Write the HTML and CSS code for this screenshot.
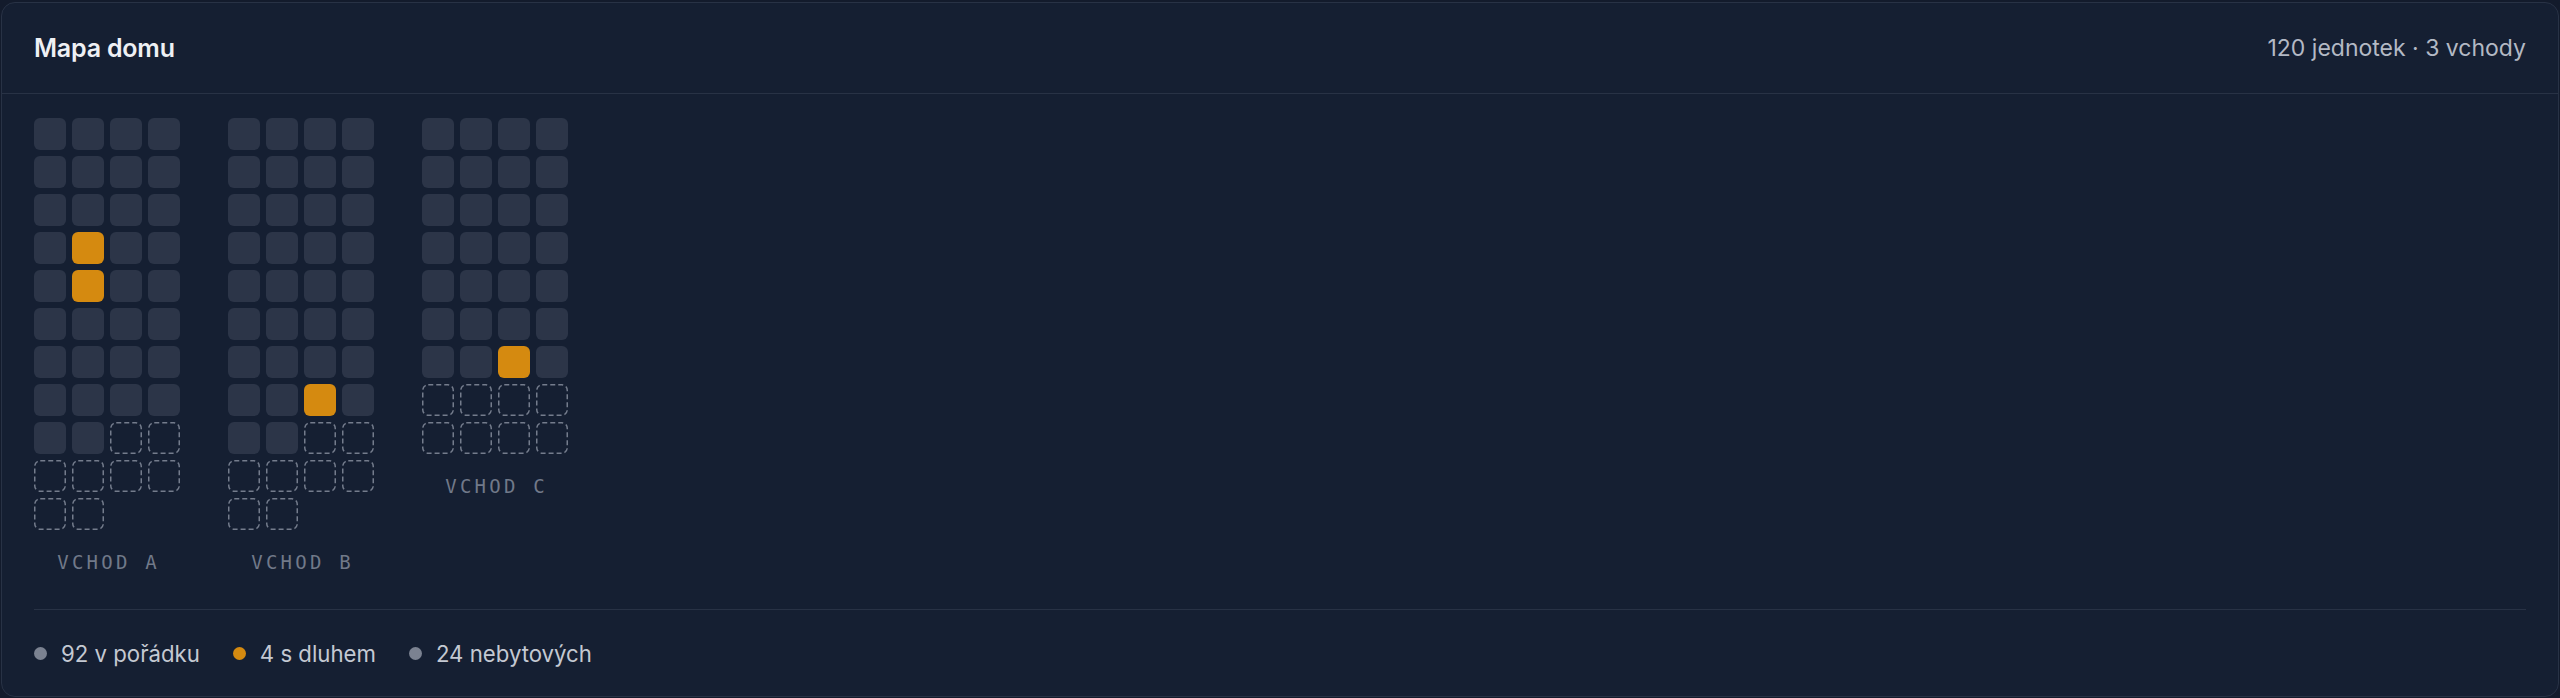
FILE: index.html
```html
<!DOCTYPE html>
<html lang="cs">
<head>
<meta charset="utf-8">
<title>Mapa domu</title>
<link rel="stylesheet" href="styles.css">
</head>
<body>
<section class="card">
  <header class="card-header">
    <h2 class="title">Mapa domu</h2>
    <span class="meta">120 jednotek · 3 vchody</span>
  </header>
  <div class="card-body">
    <div class="map">
      <div class="building">
        <div class="cells">
          <i class="cell"></i><i class="cell"></i><i class="cell"></i><i class="cell"></i>
          <i class="cell"></i><i class="cell"></i><i class="cell"></i><i class="cell"></i>
          <i class="cell"></i><i class="cell"></i><i class="cell"></i><i class="cell"></i>
          <i class="cell"></i><i class="cell debt"></i><i class="cell"></i><i class="cell"></i>
          <i class="cell"></i><i class="cell debt"></i><i class="cell"></i><i class="cell"></i>
          <i class="cell"></i><i class="cell"></i><i class="cell"></i><i class="cell"></i>
          <i class="cell"></i><i class="cell"></i><i class="cell"></i><i class="cell"></i>
          <i class="cell"></i><i class="cell"></i><i class="cell"></i><i class="cell"></i>
          <i class="cell"></i><i class="cell"></i>
          <svg class="cell empty" viewBox="0 0 32 32"><rect x="0.75" y="0.75" width="30.5" height="30.5" rx="5.5"/></svg>
          <svg class="cell empty" viewBox="0 0 32 32"><rect x="0.75" y="0.75" width="30.5" height="30.5" rx="5.5"/></svg>
          <svg class="cell empty" viewBox="0 0 32 32"><rect x="0.75" y="0.75" width="30.5" height="30.5" rx="5.5"/></svg>
          <svg class="cell empty" viewBox="0 0 32 32"><rect x="0.75" y="0.75" width="30.5" height="30.5" rx="5.5"/></svg>
          <svg class="cell empty" viewBox="0 0 32 32"><rect x="0.75" y="0.75" width="30.5" height="30.5" rx="5.5"/></svg>
          <svg class="cell empty" viewBox="0 0 32 32"><rect x="0.75" y="0.75" width="30.5" height="30.5" rx="5.5"/></svg>
          <svg class="cell empty" viewBox="0 0 32 32"><rect x="0.75" y="0.75" width="30.5" height="30.5" rx="5.5"/></svg>
          <svg class="cell empty" viewBox="0 0 32 32"><rect x="0.75" y="0.75" width="30.5" height="30.5" rx="5.5"/></svg>
        </div>
        <div class="label">VCHOD A</div>
      </div>
      <div class="building">
        <div class="cells">
          <i class="cell"></i><i class="cell"></i><i class="cell"></i><i class="cell"></i>
          <i class="cell"></i><i class="cell"></i><i class="cell"></i><i class="cell"></i>
          <i class="cell"></i><i class="cell"></i><i class="cell"></i><i class="cell"></i>
          <i class="cell"></i><i class="cell"></i><i class="cell"></i><i class="cell"></i>
          <i class="cell"></i><i class="cell"></i><i class="cell"></i><i class="cell"></i>
          <i class="cell"></i><i class="cell"></i><i class="cell"></i><i class="cell"></i>
          <i class="cell"></i><i class="cell"></i><i class="cell"></i><i class="cell"></i>
          <i class="cell"></i><i class="cell"></i><i class="cell debt"></i><i class="cell"></i>
          <i class="cell"></i><i class="cell"></i>
          <svg class="cell empty" viewBox="0 0 32 32"><rect x="0.75" y="0.75" width="30.5" height="30.5" rx="5.5"/></svg>
          <svg class="cell empty" viewBox="0 0 32 32"><rect x="0.75" y="0.75" width="30.5" height="30.5" rx="5.5"/></svg>
          <svg class="cell empty" viewBox="0 0 32 32"><rect x="0.75" y="0.75" width="30.5" height="30.5" rx="5.5"/></svg>
          <svg class="cell empty" viewBox="0 0 32 32"><rect x="0.75" y="0.75" width="30.5" height="30.5" rx="5.5"/></svg>
          <svg class="cell empty" viewBox="0 0 32 32"><rect x="0.75" y="0.75" width="30.5" height="30.5" rx="5.5"/></svg>
          <svg class="cell empty" viewBox="0 0 32 32"><rect x="0.75" y="0.75" width="30.5" height="30.5" rx="5.5"/></svg>
          <svg class="cell empty" viewBox="0 0 32 32"><rect x="0.75" y="0.75" width="30.5" height="30.5" rx="5.5"/></svg>
          <svg class="cell empty" viewBox="0 0 32 32"><rect x="0.75" y="0.75" width="30.5" height="30.5" rx="5.5"/></svg>
        </div>
        <div class="label">VCHOD B</div>
      </div>
      <div class="building">
        <div class="cells">
          <i class="cell"></i><i class="cell"></i><i class="cell"></i><i class="cell"></i>
          <i class="cell"></i><i class="cell"></i><i class="cell"></i><i class="cell"></i>
          <i class="cell"></i><i class="cell"></i><i class="cell"></i><i class="cell"></i>
          <i class="cell"></i><i class="cell"></i><i class="cell"></i><i class="cell"></i>
          <i class="cell"></i><i class="cell"></i><i class="cell"></i><i class="cell"></i>
          <i class="cell"></i><i class="cell"></i><i class="cell"></i><i class="cell"></i>
          <i class="cell"></i><i class="cell"></i><i class="cell debt"></i><i class="cell"></i>
          <svg class="cell empty" viewBox="0 0 32 32"><rect x="0.75" y="0.75" width="30.5" height="30.5" rx="5.5"/></svg>
          <svg class="cell empty" viewBox="0 0 32 32"><rect x="0.75" y="0.75" width="30.5" height="30.5" rx="5.5"/></svg>
          <svg class="cell empty" viewBox="0 0 32 32"><rect x="0.75" y="0.75" width="30.5" height="30.5" rx="5.5"/></svg>
          <svg class="cell empty" viewBox="0 0 32 32"><rect x="0.75" y="0.75" width="30.5" height="30.5" rx="5.5"/></svg>
          <svg class="cell empty" viewBox="0 0 32 32"><rect x="0.75" y="0.75" width="30.5" height="30.5" rx="5.5"/></svg>
          <svg class="cell empty" viewBox="0 0 32 32"><rect x="0.75" y="0.75" width="30.5" height="30.5" rx="5.5"/></svg>
          <svg class="cell empty" viewBox="0 0 32 32"><rect x="0.75" y="0.75" width="30.5" height="30.5" rx="5.5"/></svg>
          <svg class="cell empty" viewBox="0 0 32 32"><rect x="0.75" y="0.75" width="30.5" height="30.5" rx="5.5"/></svg>
        </div>
        <div class="label">VCHOD C</div>
      </div>
    </div>
    <footer class="legend">
      <span class="legend-item"><i class="dot dot-ok"></i>92 v pořádku</span>
      <span class="legend-item"><i class="dot dot-debt"></i>4 s dluhem</span>
      <span class="legend-item"><i class="dot dot-ok"></i>24 nebytových</span>
    </footer>
  </div>
</section>
</body>
</html>
```
FILE: styles.css
```css
html, body {
  margin: 0;
  padding: 0;
  background: #131b2c;
}

body {
  font-family: "Inter", "Noto Sans", sans-serif;
  overflow: hidden;
}

.card {
  box-sizing: border-box;
  margin: 2px 1px 1px 1px;
  height: 695px;
  background: #151f32;
  border: 1px solid #283245;
  border-radius: 14px;
  display: flex;
  flex-direction: column;
}

.card-header {
  box-sizing: border-box;
  height: 91px;
  padding: 0 32px;
  display: flex;
  align-items: center;
  justify-content: space-between;
  border-bottom: 1px solid #283245;
}

.title {
  margin: 0;
  font-size: 25px;
  font-weight: 600;
  color: #eef0f4;
  letter-spacing: -0.2px;
}

.meta {
  font-size: 23px;
  color: #b3b9c4;
}

.card-body {
  flex: 1;
  padding: 24px 32px 0;
  display: flex;
  flex-direction: column;
}

.map {
  display: flex;
  align-items: flex-start;
  gap: 48px;
  padding-bottom: 35px;
}

.building {
  display: flex;
  flex-direction: column;
  align-items: center;
}

.cells {
  display: grid;
  grid-template-columns: repeat(4, 32px);
  grid-auto-rows: 32px;
  gap: 6px;
}

.cell {
  display: block;
  box-sizing: border-box;
  width: 32px;
  height: 32px;
  border-radius: 6px;
  background: #2c3548;
}

.cell.debt {
  background: #d58a10;
}

.cell.empty {
  background: transparent;
  border-radius: 0;
}

.cell.empty rect {
  fill: none;
  stroke: #747c8c;
  stroke-width: 1.5;
  stroke-dasharray: 5 3;
}

.label {
  margin-top: 20px;
  line-height: 24px;
  font-family: "DejaVu Sans Mono", "Liberation Mono", monospace;
  font-size: 19px;
  letter-spacing: 3.2px;
  padding-left: 3.2px;
  color: #717989;
}

.legend {
  flex: 1;
  border-top: 1px solid #283245;
  display: flex;
  align-items: center;
  gap: 33px;
}

.legend-item {
  display: flex;
  align-items: center;
  gap: 14px;
  font-size: 22.2px;
  color: #c4c9d2;
}

.dot {
  display: block;
  width: 13px;
  height: 13px;
  border-radius: 50%;
}

.dot-ok {
  background: #7b8291;
}

.dot-debt {
  background: #d58a10;
}
```
